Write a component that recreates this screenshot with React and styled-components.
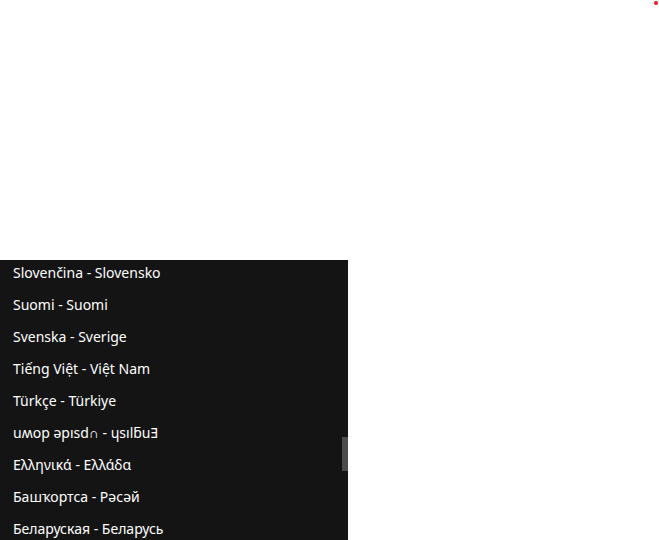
import React from "react";
import styled, { createGlobalStyle } from "styled-components";

const Global = createGlobalStyle`
  html, body { margin: 0; padding: 0; background: #ffffff; }
  body { width: 659px; height: 540px; overflow: hidden; font-family: "Noto Sans", sans-serif; }
`;

const Page = styled.div`
  position: relative;
  width: 659px;
  height: 540px;
  background: #ffffff;
`;

const Dot = styled.span`
  position: absolute;
  top: 1px;
  left: 654px;
  width: 4px;
  height: 4px;
  border-radius: 50%;
  background: #e61e1e;
`;

const Menu = styled.div`
  position: absolute;
  left: 0;
  top: 260px;
  width: 348px;
  height: 280px;
  background: #141414;
  overflow: hidden;
`;

const List = styled.ul`
  list-style: none;
  margin: -4px 0 0 0;
  padding: 0;
  display: flex;
  flex-direction: column;
`;

const Item = styled.li`
  height: 32px;
  display: flex;
  align-items: center;
  padding: 0 13px;
  color: #ffffff;
  font-size: 14px;
  white-space: nowrap;
`;

const Thumb = styled.div`
  position: absolute;
  right: 0;
  top: 177px;
  width: 6px;
  height: 34px;
  background: #4d4d4d;
`;

const items = [
  "Slovenčina - Slovensko",
  "Suomi - Suomi",
  "Svenska - Sverige",
  "Tiếng Việt - Việt Nam",
  "Türkçe - Türkiye",
  "uʍop ǝpısd∩ - ɥsılƃuƎ",
  "Ελληνικά - Ελλάδα",
  "Башҡортса - Рәсәй",
  "Беларуская - Беларусь",
];

export default function App() {
  return (
    <Page>
      <Global />
      <Dot />
      <Menu>
        <List>
          {items.map((t) => (
            <Item key={t}>{t}</Item>
          ))}
        </List>
        <Thumb />
      </Menu>
    </Page>
  );
}
